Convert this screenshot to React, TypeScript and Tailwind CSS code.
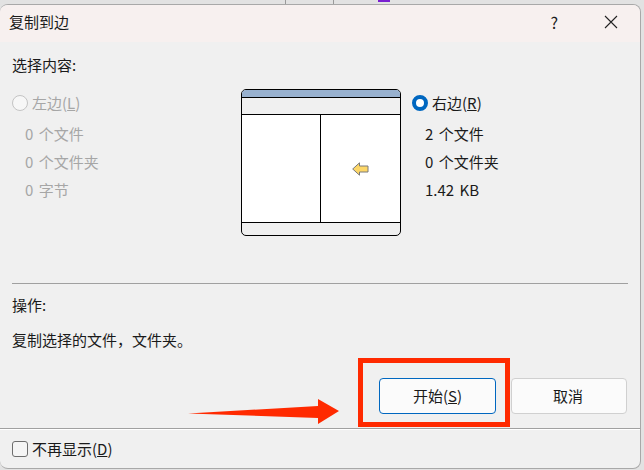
const font = { fontFamily: '"Noto Sans CJK SC", "Liberation Sans", sans-serif' };

function Radio({ checked }: { checked?: boolean }) {
  if (checked) {
    return <span className="h-4 w-4 rounded-full border-[4px] border-[#0067c0] bg-white" />;
  }
  return <span className="h-4 w-4 rounded-full border border-[#c4c4c4] bg-[#f7f7f7]" />;
}

function Side({ label, hotkey, stats, checked }: { label: string; hotkey: string; stats: string[]; checked?: boolean }) {
  return (
    <div className={checked ? "flex flex-col text-[#1a1a1a]" : "flex flex-col text-[#a6a6a6]"}>
      <div className="flex h-4 items-center gap-1">
        <Radio checked={checked} />
        <span>
          {label}(<u>{hotkey}</u>)
        </span>
      </div>
      <div className="mt-[13px] flex flex-col gap-2 pl-[13px] [word-spacing:2px]">
        {stats.map((s) => (
          <div key={s} className="h-5 leading-5">
            {s}
          </div>
        ))}
      </div>
    </div>
  );
}

function Preview() {
  return (
    <div className="flex h-[147px] w-[160px] flex-col overflow-hidden rounded-[5px] border border-black">
      <div className="h-2 border-b border-black bg-[#98b1cf]" />
      <div className="h-[17px] border-b border-black" />
      <div className="flex h-[108px] border-b border-black bg-white">
        <div className="w-[79px] border-r border-black" />
        <div className="flex flex-1 items-center justify-center pr-[1px] pt-[1px]">
          <svg width="17" height="14" viewBox="0 0 17 14">
            <path d="M0.7 7 L7.5 0.8 V4 H16 V10 H7.5 V13.2 Z" fill="#fdd768" stroke="#7a7a7a" strokeWidth="1" />
          </svg>
        </div>
      </div>
    </div>
  );
}

export default function App() {
  return (
    <div className="relative h-[470px] w-[644px] overflow-hidden bg-[#e2e2e2] pr-[3px] pt-1 text-[15px] leading-5" style={font}>
      {/* window behind */}
      <div className="absolute left-[285px] top-0 h-1 w-px bg-[#9a9a9a]" />
      <div className="absolute left-[333px] top-0 h-1 w-px bg-[#9a9a9a]" />
      <div className="absolute left-[378px] top-0 h-[2px] w-3 bg-[#7a1fd0]" />

      <div className="flex h-[465px] flex-col overflow-hidden rounded-lg border border-l-0 border-[#a8a8a8] bg-[#f0f0f0]">
        <div className="flex h-[37px] shrink-0 items-center justify-between bg-[#f7f0ef] pb-1 pl-[9px] pr-[22px] text-[#1a1a1a]">
          <span>复制到边</span>
          <div className="flex items-center gap-[46px]">
            <span className="text-[16px]">?</span>
            <svg width="14" height="14" viewBox="0 0 14 14">
              <path d="M1 1 L13 13 M13 1 L1 13" stroke="#222" strokeWidth="1.1" fill="none" />
            </svg>
          </div>
        </div>

        <div className="flex flex-1 flex-col px-3">
          <div className="mt-[13px] text-[#1a1a1a]">选择内容:</div>
          <div className="mt-[14px] flex h-[147px] items-start">
            <div className="w-[229px] pt-[6px]">
              <Side label="左边" hotkey="L" stats={["0 个文件", "0 个文件夹", "0 字节"]} />
            </div>
            <Preview />
            <div className="pl-[11px] pt-[6px]">
              <Side label="右边" hotkey="R" stats={["2 个文件", "0 个文件夹", "1.42 KB"]} checked />
            </div>
          </div>
          <div className="mt-[47px] h-px bg-[#a0a0a0]" />
          <div className="mt-[11px] text-[#1a1a1a]">操作:</div>
          <div className="mt-[15px] text-[#1a1a1a]">复制选择的文件{"\uFF0C"}文件夹。</div>
          <div className="mt-[28px] flex justify-end gap-[15px] pr-[1px]">
            <button className="h-9 w-[117px] rounded-[4px] border border-[#0067c0] bg-[#fbfbfb] text-[#1a1a1a]">
              开始(<u>S</u>)
            </button>
            <button className="h-9 w-[116px] rounded-[4px] border border-[#d0d0d0] bg-[#fbfbfb] pr-[2px] text-[#1a1a1a]">取消</button>
          </div>
        </div>

        <div className="flex h-[40px] shrink-0 items-center gap-[4px] border-t border-[#a0a0a0] pl-3 text-[#1a1a1a] shadow-[inset_0_1px_0_#fff]">
          <span className="h-4 w-4 rounded-[3px] border border-[#6e6e6e] bg-[#f5f5f5]" />
          <span>
            不再显示(<u>D</u>)
          </span>
        </div>
      </div>

      {/* red annotation */}
      <div className="absolute left-[358px] top-[358px] h-[69px] w-[152px] border-[5px] border-[#ff2a00]" />
      <svg className="absolute left-[188px] top-[396px]" width="154" height="30" viewBox="0 0 154 30">
        <path d="M0 17.5 L130 10 L130 3 L151 15 L130 28 L130 22 Z" fill="#ff2a00" />
      </svg>
    </div>
  );
}
